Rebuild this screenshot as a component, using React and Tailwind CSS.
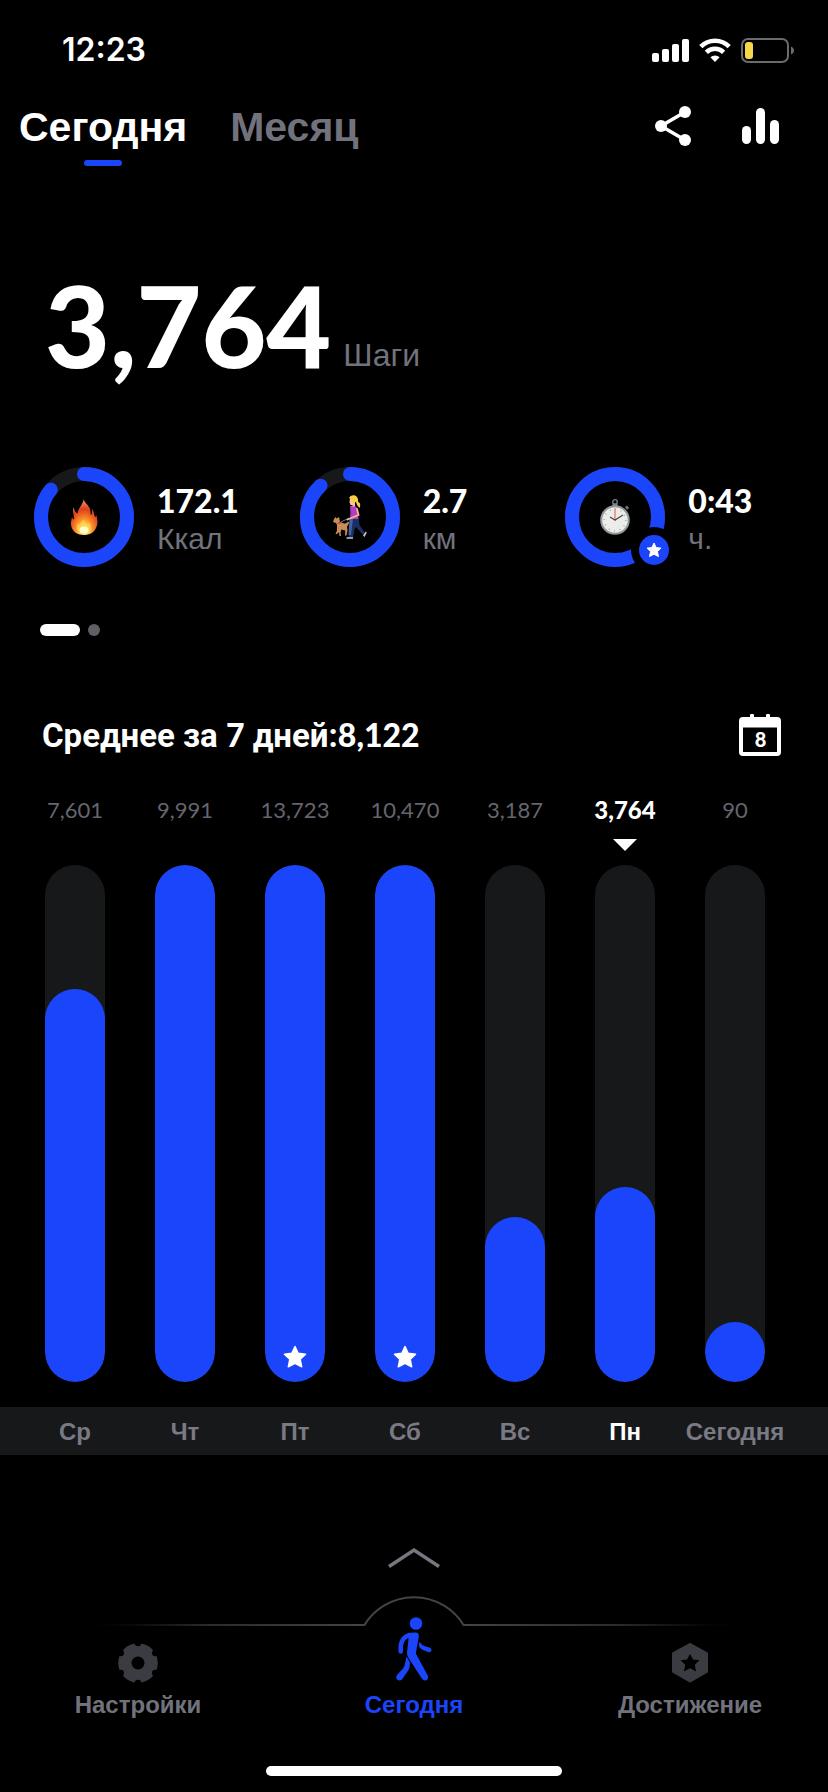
import React from 'react';

const stats = [
    { value: '172.1', unit: 'Ккал', progress: 86, icon: 'fire' },
    { value: '2.7', unit: 'км', progress: 88, icon: 'walk' },
    { value: '0:43', unit: 'ч.', progress: 100, icon: 'timer' },
];

const week = [
    { day: 'Ср', steps: 7601 },
    { day: 'Чт', steps: 9991 },
    { day: 'Пт', steps: 13723 },
    { day: 'Сб', steps: 10470 },
    { day: 'Вс', steps: 3187 },
    { day: 'Пн', steps: 3764, active: true },
    { day: 'Сегодня', steps: 90 },
];

const GOAL = 10000;

const Star = ({ className }) => (
    <svg viewBox="0 0 24 24" className={className} fill="currentColor" stroke="currentColor" strokeWidth="1.5" strokeLinejoin="round" aria-hidden="true">
        <path d="M12 1.5l3.2 6.800 7.300.9-5.300 5.100 1.500 7.500L12 18.400 5.300 21.800l1.500-7.500L1.500 9.200l7.300-.9z" />
    </svg>
);

const FireIcon = () => (
    <svg viewBox="0 0 28 36" className="h-9 w-7" aria-hidden="true">
        <defs>
            <radialGradient id="fire" cx="0.5" cy="0.88" r="0.8">
                <stop offset="0" stopColor="#fff6b0" />
                <stop offset="0.2" stopColor="#ffd84a" />
                <stop offset="0.42" stopColor="#fb8c28" />
                <stop offset="0.75" stopColor="#dd3f1c" />
                <stop offset="1" stopColor="#f08050" />
            </radialGradient>
        </defs>
        <path fill="url(#fire)" d="M13.5 0c.5 3 5 6 6.5 10 .8 2.5.5 4.500.8 6 1.200-1 1.700-3.500 1.200-6 2.500 3 1.500 5 3 7.500.6 1 1 0 1.200-1.500 1.500 4 2 8-.2 13-2 4.500-6.500 7-12 7-6.500 0-11-3-12.500-8-1.200-4 0-7 .5-10 .5 1.500 1 2.500 2 2.500C5 18 2 14 3.500 8c.5 2.500 2 6 4 6.500C8 9 13 6 13.500 0z" />
        <path fill="#ffd95a" opacity="0.6" d="M14 20c.5 3 3 4 3.500 6 1-1 1.500-2 1.500-3 2.500 3.500 3 7 .5 9.500-3 2.500-8 2.500-11 0-2.500-2.500-2-6-.5-8.500.5 1.500 1 2 1.800 2C10 23 13 22 14 20z" />
        <ellipse cx="14" cy="31" rx="4.5" ry="3.5" fill="#fffbd0" />
    </svg>
);

const WalkDogIcon = () => (
    <svg viewBox="0 0 34 44" className="h-11 w-[34px]" aria-hidden="true">
        <path d="M8 27L16 23" stroke="#5b7fb5" strokeWidth="1" />
        {/* dog */}
        <path fill="#c98d54" d="M1 24l1.500-2 1 1.500L6 22l1 5 4 1.500c2 0 3-.5 4-2l1 .5c0 2-1 3-2 4.500l.5 4-1 5h-1.500l.3-5-3.800-1-1 3 .5 3.500H6.500L6 37l-2 2H2.500l1.500-3.500L4 30l-1-2-3-1z" />
        <path d="M4.500 28.5l3-.8" stroke="#d23c3c" strokeWidth="1.5" />
        {/* legs and shoes */}
        <path fill="#1c2f63" d="M17 23h8.500l1 7 5.500 8-2 2-7-8-1.500 2-1.500 8.500h-4.500l1-9z" />
        <path fill="#3d62a8" d="M16.500 24h3.500l-2 16h-2.500z" />
        <path fill="#c9cad2" d="M13.500 42.300h6.500v1.500h-6.500zM30 40.500l2.800-4 1 1-2.300 4.500z" />
        {/* shirt, arms, head */}
        <path fill="#b53bc2" d="M17 11h5c2 1 2.500 3 3 6l.5 7H17l.5-6z" />
        <path d="M24 14l1.500 6-8.500 3.500-2.500 1" fill="none" stroke="#f6b78d" strokeWidth="1.8" strokeLinecap="round" />
        <path fill="#f8c39b" d="M17 3h5v8l-2.500 1v-2H17.500l-1-2.500z" />
        <path fill="#f6cf45" d="M16 3c1-3 6-4 8-1 1.500 2 1 4 1 5 2 0 3 3 1.500 6-1-1-3-3-3.500-6l-3 1-.5-3.500z" />
    </svg>
);

const TimerIcon = () => (
    <svg viewBox="0 0 30 36" className="h-9 w-[30px]" fill="none" aria-hidden="true">
        <circle cx="15" cy="3" r="2.3" stroke="#7b8388" strokeWidth="1.3" />
        <path d="M12.500 4.500h5v3h-5z" fill="#7c8488" />
        <path d="M26 9.500l2-1.800" stroke="#6c7478" strokeWidth="3.5" />
        <circle cx="15" cy="21" r="13.8" fill="#ecece8" stroke="#8f989c" strokeWidth="2" />
        <circle cx="15" cy="21" r="10.8" stroke="#999" strokeWidth="1.5" strokeDasharray=".8 4.850" />
        <path d="M15 22V9.500" stroke="#e58a7c" strokeWidth="1.5" />
        <path d="M10 18L15 21l8-5" stroke="#444" strokeWidth="1.100" />
    </svg>
);

const icons = { fire: FireIcon, walk: WalkDogIcon, timer: TimerIcon };

const Ring = ({ progress, icon }) => {
    const Icon = icons[icon];
    const done = progress >= 100;
    return (
        <div className="relative flex size-[100px] shrink-0 items-center justify-center">
            <svg viewBox="0 0 100 100" className="absolute inset-0 size-full -rotate-90" fill="none" strokeWidth="14" aria-hidden="true">
                <circle cx="50" cy="50" r="43" stroke="#17181a" />
                <circle cx="50" cy="50" r="43" stroke="#1b45fa" pathLength="100" strokeDasharray={`${progress} 100`} strokeLinecap={done ? 'butt' : 'round'} />
            </svg>
            <Icon />
            {done && (
                <span className="absolute -right-3 -bottom-[6px] flex size-[46px] items-center justify-center rounded-full bg-black">
                    <span className="flex size-[30px] items-center justify-center rounded-full bg-[#1b45fa] text-white">
                        <Star className="size-4" />
                    </span>
                </span>
            )}
        </div>
    );
};

const StatusBar = () => (
    <div className="flex h-[84px] items-center justify-between pt-4 pr-[34px] pl-[62px]">
        <time className="font-['Inter'] text-[32px] font-semibold">12:23</time>
        <div className="flex items-center gap-[10px]">
            <svg viewBox="0 0 37 23" className="h-[23px] w-[37px]" fill="#fff" aria-hidden="true">
                <rect x="0" y="14" width="7" height="9" rx="2" />
                <rect x="10" y="10" width="7" height="13" rx="2" />
                <rect x="20" y="5" width="7" height="18" rx="2" />
                <rect x="30" y="0" width="7" height="23" rx="2" />
            </svg>
            <svg viewBox="0 0 32 24" className="h-6 w-8" fill="none" stroke="#fff" strokeWidth="4.5" aria-hidden="true">
                <path d="M1.800 8.700a20 20 0 0 1 28.400 0" />
                <path d="M7.400 14.400a12.200 12.200 0 0 1 17.200 0" />
                <path d="M16 24l-4.600-4.700a6.600 6.600 0 0 1 9.200 0z" fill="#fff" stroke="none" />
            </svg>
            <svg viewBox="0 0 53 25" className="h-[25px] w-[53px]" fill="none" aria-hidden="true">
                <rect x="1" y="1" width="46" height="23" rx="6" stroke="#6b6b6b" strokeWidth="2" />
                <rect x="4" y="4" width="8" height="17" rx="3" fill="#f7d64a" />
                <path d="M50 8.500c4 1.500 4 6.500 0 8z" fill="#6b6b6b" />
            </svg>
        </div>
    </div>
);

const Header = () => (
    <header className="flex items-start justify-between pt-[18px] pr-12 pl-[19px]">
        <div className="flex gap-[43px] text-[41px] leading-[50px] font-bold">
            <button type="button" className="flex flex-col items-center gap-2">
                Сегодня
                <span className="h-[6px] w-[38px] rounded-full bg-[#1b45fa]" />
            </button>
            <button type="button" className="self-start text-[#72727d]">Месяц</button>
        </div>
        <div className="mt-1 flex gap-[50px]">
            <button type="button" aria-label="Поделиться">
                <svg viewBox="0 0 38 40" className="h-10 w-[38px]" fill="#fff" aria-hidden="true">
                    <path d="M31 6L7 20l24 14" fill="none" stroke="#fff" strokeWidth="3.5" />
                    <circle cx="31" cy="6" r="6" />
                    <circle cx="7" cy="20" r="6" />
                    <circle cx="31" cy="34" r="6" />
                </svg>
            </button>
            <button type="button" aria-label="Статистика">
                <svg viewBox="0 0 38 40" className="h-10 w-[38px]" fill="#fff" aria-hidden="true">
                    <rect x="0" y="20" width="9" height="18" rx="4.5" />
                    <rect x="14" y="2" width="9" height="36" rx="4.5" />
                    <rect x="28" y="14" width="9" height="24" rx="4.5" />
                </svg>
            </button>
        </div>
    </header>
);

const WeekChart = () => (
    <section className="mt-10">
        <ul className="grid grid-cols-7 pr-[38px] pl-5">
            {week.map(({ day, steps, active }) => (
                <li key={day} className="flex flex-col items-center">
                    <span className={`font-['Lato'] leading-7 ${active ? 'text-[24px] font-black' : 'text-[22px] text-[#65656f]'}`}>
                        {steps.toLocaleString('en-US')}
                    </span>
                    <svg viewBox="0 0 24 12" className={`mt-[15px] mb-[14px] h-3 w-6 ${active ? '' : 'invisible'}`} fill="#fff" aria-hidden="true">
                        <path d="M0 0h24L12 12z" />
                    </svg>
                    <div className="flex h-[517px] w-[60px] items-end overflow-hidden rounded-full bg-[#17181a]">
                        <div
                            className="flex min-h-[60px] w-full items-end justify-center rounded-full bg-[#1b45fa] pb-[13px]"
                            style={{ height: `${Math.min(100, (steps / GOAL) * 100)}%` }}
                        >
                            {steps >= GOAL && <Star className="size-6" />}
                        </div>
                    </div>
                </li>
            ))}
        </ul>
        <ul className="mt-[25px] grid h-12 grid-cols-7 items-center bg-[#17181a] pt-[2px] pr-[38px] pl-5 text-[24px] font-bold">
            {week.map(({ day, active }) => (
                <li key={day} className={`text-center ${active ? 'text-white' : 'text-[#7a7a85]'}`}>{day}</li>
            ))}
        </ul>
    </section>
);

const BottomNav = () => (
    <footer>
        <div className="flex items-end px-[60px]">
            <div className="h-[2px] flex-1 bg-gradient-to-r from-black via-[#2c2c2f] to-[#434348]" />
            <svg viewBox="0 0 102 30" className="h-[30px] w-[102px]" fill="none" stroke="#434348" strokeWidth="2" aria-hidden="true">
                <path d="M0 29H1.500A58 58 0 0 1 100.500 29H102" />
            </svg>
            <div className="h-[2px] flex-1 bg-gradient-to-l from-black via-[#2c2c2f] to-[#434348]" />
        </div>
        <nav className="-mt-[9px] grid grid-cols-3 items-end text-center text-[24px] leading-7 font-bold text-[#72727d]">
            <a href="#settings" className="flex flex-col items-center gap-2">
                <svg viewBox="0 0 40 40" className="size-10" aria-hidden="true">
                    <circle cx="20" cy="20" r="19.8" fill="#3b3c41" />
                    <g fill="#000">
                        <circle cx="20" cy="0" r="3.3" />
                        <circle cx="37.3" cy="10" r="3.3" />
                        <circle cx="37.3" cy="30" r="3.3" />
                        <circle cx="20" cy="40" r="3.3" />
                        <circle cx="2.7" cy="30" r="3.3" />
                        <circle cx="2.7" cy="10" r="3.3" />
                        <circle cx="20" cy="20" r="6.5" />
                    </g>
                </svg>
                Настройки
            </a>
            <a href="#today" className="flex flex-col items-center gap-2 text-[#1b45fa]" aria-current="page">
                <svg viewBox="0 0 36 66" className="h-[66px] w-9" fill="currentColor" stroke="currentColor" strokeLinecap="round" strokeLinejoin="round" aria-hidden="true">
                    <circle cx="20" cy="6.5" r="6.3" stroke="none" />
                    <path fill="none" d="M4.700 34.500V29Q5.500 20.500 13.500 18" strokeWidth="4.5" />
                    <path stroke="none" d="M11.500 16.700Q15.500 15 20 15.500Q23.500 16.300 22.800 20L19.800 36.500L31.800 58.500Q33 62 29.800 63.500Q27.500 64 26 61.800L12.500 41Q10.800 38.500 11 35.500L12.500 22z" />
                    <path stroke="none" d="M23.500 24.500Q25.500 28.200 29 29.200L33.500 30.500Q36.500 32 35 34.500Q34 35.500 32 35L26.500 32.800Q23 31 23 28.500z" />
                    <path stroke="none" d="M10.500 39.500L14 45.500Q14 50 12.500 53L6 62.500Q3.500 64.500 1 62.500Q-.5 60.500 1 58L7 51.500Q8.500 49.500 9 46.500z" />
                </svg>
                Сегодня
            </a>
            <a href="#achievements" className="flex flex-col items-center gap-2">
                <svg viewBox="0 0 40 40" className="size-10" aria-hidden="true">
                    <path fill="#3b3c41" stroke="#3b3c41" strokeWidth="3" strokeLinejoin="round" d="M20 1.500l16.500 9v18L20 38 3.500 28.500V10.500z" />
                    <path d="M20 11l3 5.500 6.500.8-4.700 4.500 1.200 6.700-6-3.200-6 3.200 1.200-6.700-4.700-4.500 6.500-.8z" fill="#000" />
                </svg>
                Достижение
            </a>
        </nav>
    </footer>
);

const App = () => (
    <div className="min-h-screen overflow-x-hidden bg-black font-['Liberation_Sans',sans-serif] text-white">
        <StatusBar />
        <Header />

        <main>
            <h1 className="mt-[103px] flex items-end gap-3 pl-[45px]">
                <span className="font-['Lato'] text-[112px] leading-none font-black">3,764</span>
                <span className="pb-2 text-[32px] leading-9 font-normal text-[#72727d]">Шаги</span>
            </h1>

            <ul className="-mr-[3px] mt-[86px] grid grid-cols-3 pl-[34px]">
                {stats.map(({ value, unit, progress, icon }) => (
                    <li key={icon} className="flex items-center gap-[23px]">
                        <Ring progress={progress} icon={icon} />
                        <div className="flex flex-col pt-1">
                            <span className="font-['Lato'] text-[32px] leading-10 font-black">{value}</span>
                            <span className="text-[30px] leading-9 text-[#72727d]">{unit}</span>
                        </div>
                    </li>
                ))}
            </ul>

            <div className="mt-[57px] flex gap-2 pl-10">
                <span className="h-3 w-10 rounded-full bg-white" />
                <span className="size-3 rounded-full bg-[#5f5f66]" />
            </div>

            <div className="mt-[78px] flex h-[42px] items-center justify-between pr-[46px] pl-[42px]">
                <h2 className="font-['Roboto'] text-[33px] leading-10 font-bold">
                    Среднее за <span className="font-['Lato'] text-[32px] font-black">7</span> дней:
                    <span className="font-['Lato'] text-[32px] font-black">8,122</span>
                </h2>
                <button type="button" aria-label="Календарь" className="relative">
                    <svg viewBox="0 0 43 42" className="h-[42px] w-[43px]" aria-hidden="true">
                        <path fill="#fff" fillRule="evenodd" d="M4 3H11V1.500a2 2 0 0 1 4 0V3H27V1.500a2 2 0 0 1 4 0V3H38Q42 3 42 7V38Q42 42 38 42H4Q0 42 0 38V7Q0 3 4 3zM4 13.500V38H38V13.500z" />
                    </svg>
                    <span className="absolute inset-x-0 top-[11px] font-['Lato'] text-[20px] leading-7 font-black">8</span>
                </button>
            </div>

            <WeekChart />

            <button type="button" aria-label="Развернуть" className="mx-auto mt-[92px] mb-[27px] block">
                <svg viewBox="0 0 52 22" className="h-[22px] w-[52px]" fill="none" stroke="#77777f" strokeWidth="3.5" aria-hidden="true">
                    <path d="M1 19.500L26 3l25 16.500" />
                </svg>
            </button>
        </main>

        <BottomNav />
        <div className="mx-auto mt-[47px] mb-4 h-[10px] w-[296px] rounded-full bg-white" />
    </div>
);

export default App;
